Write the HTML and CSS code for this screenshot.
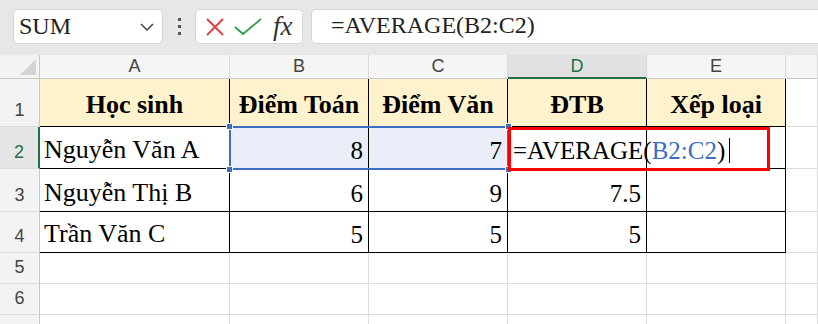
FILE: index.html
```html
<!DOCTYPE html>
<html>
<head>
<meta charset="utf-8">
<link rel="stylesheet" href="styles.css">
</head>
<body>
<div class="toolbar">
  <div class="namebox">
    <span class="name">SUM</span>
    <svg class="chev" width="14" height="8" viewBox="0 0 14 8"><path d="M1 1 L7 7 L13 1" fill="none" stroke="#444" stroke-width="1.5"/></svg>
  </div>
  <div class="dots"><i></i><i></i><i></i></div>
  <div class="fxbox">
    <svg width="20" height="20" viewBox="0 0 20 20"><path d="M2 2 L18 18 M18 2 L2 18" stroke="#e8383d" stroke-width="1.8" fill="none"/></svg>
    <svg width="28" height="18" viewBox="0 0 28 18"><path d="M1 9 L9 16 L27 1" stroke="#2f9a4a" stroke-width="1.8" fill="none"/></svg>
    <span class="fx">fx</span>
  </div>
  <div class="formula">=AVERAGE(B2:C2)</div>
</div>
<div class="sheet">
  <div class="corner"><span class="tri"></span></div>
  <div class="ch">A</div>
  <div class="ch">B</div>
  <div class="ch">C</div>
  <div class="ch sel">D</div>
  <div class="ch">E</div>
  <div class="ch last"></div>

  <div class="rh">1</div>
  <div class="c t hd">Học sinh</div>
  <div class="c t hd">Điểm Toán</div>
  <div class="c t hd">Điểm Văn</div>
  <div class="c t hd">ĐTB</div>
  <div class="c t hd">Xếp loại</div>
  <div class="c"></div>

  <div class="rh sel">2</div>
  <div class="c t">Nguyễn Văn A</div>
  <div class="c t num selbg">8</div>
  <div class="c t num selbg">7</div>
  <div class="c t edit"><span class="ed">=AVERAGE(<span class="ref">B2:C2</span>)<span class="caret"></span></span></div>
  <div class="c t"></div>
  <div class="c"></div>

  <div class="rh">3</div>
  <div class="c t">Nguyễn Thị B</div>
  <div class="c t num">6</div>
  <div class="c t num">9</div>
  <div class="c t num">7.5</div>
  <div class="c t"></div>
  <div class="c"></div>

  <div class="rh">4</div>
  <div class="c t">Trần Văn C</div>
  <div class="c t num">5</div>
  <div class="c t num">5</div>
  <div class="c t num">5</div>
  <div class="c t"></div>
  <div class="c"></div>

  <div class="rh">5</div>
  <div class="c"></div><div class="c"></div><div class="c"></div><div class="c"></div><div class="c"></div><div class="c"></div>
  <div class="rh">6</div>
  <div class="c"></div><div class="c"></div><div class="c"></div><div class="c"></div><div class="c"></div><div class="c"></div>
  <div class="rh"></div>
  <div class="c"></div><div class="c"></div><div class="c"></div><div class="c"></div><div class="c"></div><div class="c"></div>

  <div class="selbox"><i class="h h1"></i><i class="h h2"></i><i class="h h3"></i><i class="h h4"></i></div>
  <div class="redbox"></div>
</div>
</body>
</html>
```

FILE: styles.css
```css
* { box-sizing: border-box; }
html, body { margin: 0; padding: 0; background: #fff; overflow: hidden; }
body { width: 818px; height: 324px; }

.toolbar {
  height: 55px;
  background: #e7e7ea;
  display: flex;
  align-items: flex-start;
  padding: 9px 0 0 13px;
}
.namebox {
  width: 150px; height: 35px;
  background: #fff;
  border: 1px solid #d6d6da;
  border-radius: 5px;
  display: flex; align-items: center; justify-content: space-between;
  padding: 0 8px 0 5px;
}
.name { font-family: "Liberation Serif", serif; font-size: 24px; color: #222; }
.dots {
  width: 32px; height: 35px;
  display: flex; flex-direction: column; align-items: center; justify-content: center; gap: 4px;
}
.dots i { display: block; width: 3px; height: 3px; background: #555; }
.fxbox {
  width: 108px; height: 35px;
  background: #fff;
  border: 1px solid #d6d6da;
  border-radius: 5px;
  display: flex; align-items: center;
  padding: 0 0 0 9px; gap: 9px;
}
.fx { font-family: "Liberation Serif", serif; font-style: italic; font-size: 27px; color: #333; margin-left: 2px; line-height: 1; }
.formula {
  margin-left: 8px;
  flex: 1;
  height: 35px;
  background: #fff;
  border: 1px solid #d6d6da;
  border-right: none;
  border-radius: 5px 0 0 5px;
  font-family: "Liberation Serif", serif; font-size: 24px; color: #222;
  padding: 2px 0 0 19px;
}

.sheet {
  position: relative;
  display: grid;
  grid-template-columns: 40px 190px 139px 139px 139px 139px 1fr;
  grid-template-rows: 24px 48px 42px 43px 41px 31px 31px 40px;
}
.corner {
  background: #f3f3f3;
  border-right: 1px solid #c8c8c8;
  border-bottom: 1px solid #c8c8c8;
  position: relative;
}
.tri {
  position: absolute; right: 3px; bottom: 3px;
  width: 0; height: 0;
  border-left: 16px solid transparent;
  border-bottom: 16px solid #d4d4d4;
}
.ch {
  background: #f5f5f5;
  border-right: 1px solid #d9d9d9;
  border-bottom: 1px solid #c8c8c8;
  font-family: "Liberation Sans", sans-serif; font-size: 18px; color: #444;
  display: flex; align-items: center; justify-content: center;
}
.ch.sel { background: #e1e1e1; color: #1e7145; border-bottom: 2px solid #1e7145; }
.rh {
  background: #f3f3f3;
  border-right: 1px solid #c8c8c8;
  border-bottom: 1px solid #dcdcdc;
  font-family: "Liberation Sans", sans-serif; font-size: 18px; color: #444;
  display: flex; align-items: flex-end; justify-content: center;
  padding-bottom: 5px;
}
.rh.sel { background: #e6e6e6; color: #1e7145; border-right: 2px solid #1e7145; }
.c {
  border-right: 1px solid #dcdcdc;
  border-bottom: 1px solid #dcdcdc;
  font-family: "Liberation Serif", serif; font-size: 26px; color: #000;
  display: flex; align-items: flex-end;
  padding: 0 5px 5px 4px;
  line-height: 1;
  white-space: nowrap;
}
.c.t { border-right: 1px solid #000; border-bottom: 1px solid #000; }
.c.hd { background: #fff2cc; font-weight: bold; justify-content: center; align-items: center; padding: 4px 2px 0; }
.c.num { justify-content: flex-end; font-size: 25px; }
.selbg { background: #e9eef8; }
.edit { overflow: visible; position: relative; z-index: 2; }
.ed { font-size: 25px; position: relative; margin-left: 1px; }
.ref { color: #3a6ec6; }
.caret { display: inline-block; width: 1px; height: 25px; background: #000; vertical-align: -4px; margin-left: 4px; }

.selbox {
  position: absolute;
  left: 229px; top: 71px;
  width: 280px; height: 44px;
  border: 2px solid #3b6fc4;
  pointer-events: none;
}
.h { position: absolute; width: 7px; height: 7px; background: #3b6fc4; border: 1px solid #fff; }
.h1 { left: -5px; top: -5px; }
.h2 { left: -5px; bottom: -5px; }
.h3 { right: -5px; top: -5px; }
.h4 { right: -5px; bottom: -5px; }
.redbox {
  position: absolute;
  left: 508px; top: 72px;
  width: 262px; height: 44px;
  border: 3.5px solid #ff0000;
  z-index: 3;
}
```
